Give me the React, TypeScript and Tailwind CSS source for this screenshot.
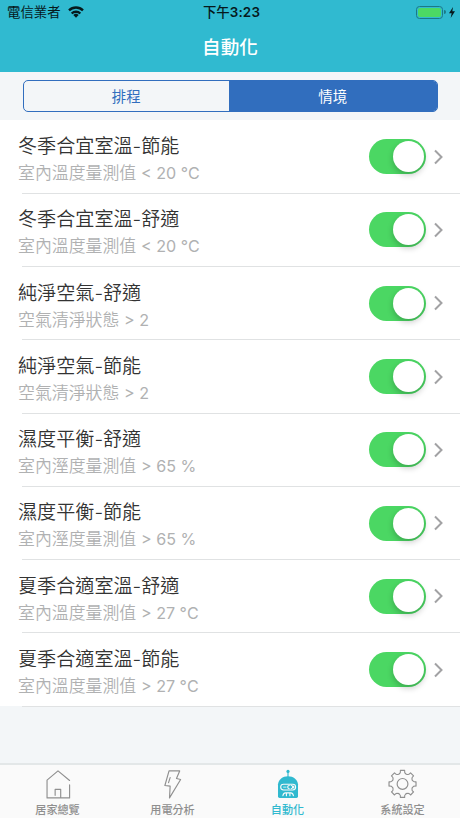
import type { ReactNode } from "react";

type Rule = {
  title: string;
  condition: string;
  value: string;
};

const RULES: Rule[] = [
  { title: "冬季合宜室溫-節能", condition: "室內溫度量測值", value: "< 20 °C" },
  { title: "冬季合宜室溫-舒適", condition: "室內溫度量測值", value: "< 20 °C" },
  { title: "純淨空氣-舒適", condition: "空氣清淨狀態", value: "> 2" },
  { title: "純淨空氣-節能", condition: "空氣清淨狀態", value: "> 2" },
  { title: "濕度平衡-舒適", condition: "室內溼度量測值", value: "> 65 %" },
  { title: "濕度平衡-節能", condition: "室內溼度量測值", value: "> 65 %" },
  { title: "夏季合適室溫-舒適", condition: "室內溫度量測值", value: "> 27 °C" },
  { title: "夏季合適室溫-節能", condition: "室內溫度量測值", value: "> 27 °C" },
];

function StatusBar() {
  return (
    <div className="grid h-6 grid-cols-3 items-center text-[13.4px] font-medium leading-6 text-[#06191c]">
      <div className="flex items-center gap-[7px] pl-[7px]">
        <span className="font-normal">電信業者</span>
        <svg viewBox="0 0 48 36" className="h-3 w-4" fill="none" stroke="#06191c" strokeWidth="7">
          <path d="M3 13a30 30 0 0 1 42 0M11 22.5a19 19 0 0 1 26 0" />
          <path d="M24 35l-8-8a12 12 0 0 1 16 0z" fill="#06191c" stroke="none" />
        </svg>
      </div>
      <div className="pl-[3px] text-center">
        下午<span className="font-semibold tracking-[0.2px]">3:23</span>
      </div>
      <div className="flex items-center justify-end pr-[5px]">
        <div className="h-[13px] w-[27px] rounded-[3.5px] border border-[#1c7986] p-px">
          <div className="h-full rounded-[2px] bg-[#4cd964]" />
        </div>
        <div className="ml-px h-1 w-[1.5px] rounded-r bg-[#1c7986]" />
        <svg viewBox="0 0 18 33" className="ml-[3px] h-[11px] w-[6px]" fill="#06191c">
          <path d="M12 0L0 19h8L5 33l13-20h-8z" />
        </svg>
      </div>
    </div>
  );
}

function Toggle() {
  return (
    <div className="flex h-[35px] w-[57px] shrink-0 items-center justify-end rounded-full bg-[#4bd763] pr-[2px]">
      <div className="h-[31px] w-[31px] rounded-full bg-white shadow-[0_3px_6px_rgba(0,0,0,0.22)]" />
    </div>
  );
}

function RuleRow({ title, condition, value }: Rule) {
  return (
    <div className="relative flex h-[73.3px] items-center bg-white pl-[18px] pr-[17px] after:absolute after:-bottom-[0.4px] after:left-[22px] after:right-0 after:z-10 after:h-px after:bg-[#e0e2e3]">
      <div className="flex-1 whitespace-nowrap pt-[4.6px]">
        <div className="text-[19.1px] font-[350] leading-7 text-[#333333]">{title}</div>
        <div className="text-[16.9px] font-[350] leading-[26px] text-[#b0b1b2]">
          {condition} <span className="text-[16.1px] font-normal">{value}</span>
        </div>
      </div>
      <Toggle />
      <svg viewBox="0 0 9 16" className="ml-2 h-4 w-[9px]" fill="none" stroke="#a2a2a4" strokeWidth="2">
        <path d="M1 1.5L7.5 8 1 14.5" />
      </svg>
    </div>
  );
}

// Outline of an eight-toothed gear centred on (46.5, 47)
function gearPath() {
  const at = (r: number, deg: number) => {
    const a = (deg * Math.PI) / 180;
    return `${(46.5 + r * Math.cos(a)).toFixed(1)} ${(47 + r * Math.sin(a)).toFixed(1)}`;
  };
  let d = `M${at(43, -9)}`;
  for (let i = 0; i < 8; i++) {
    const t = i * 45;
    d += `L${at(43, t + 9)}Q${at(35, t + 10)} ${at(34.5, t + 15)}Q${at(31, t + 22.5)} ${at(34.5, t + 30)}Q${at(35, t + 35)} ${at(43, t + 36)}`;
  }
  return d + "Z";
}

function TabIcon({ children }: { children: ReactNode }) {
  return (
    <svg
      viewBox="0 0 96 96"
      className="h-8 w-8"
      fill="none"
      stroke="currentColor"
      strokeWidth="3.6"
      strokeLinejoin="round"
      strokeLinecap="round"
    >
      {children}
    </svg>
  );
}

function Tab({ label, active, children }: { label: string; active?: boolean; children: ReactNode }) {
  return (
    <div
      className={`flex flex-1 flex-col items-center pt-[4px] ${
        active ? "text-[#30b9cf]" : "text-[#8f8f8f]"
      }`}
    >
      <TabIcon>{children}</TabIcon>
      <span className="mt-[2.5px] text-[11.1px] font-medium leading-4">{label}</span>
    </div>
  );
}

export default function App() {
  return (
    <main className="flex h-[818px] w-[460px] flex-col overflow-hidden bg-[#f3f6f8] font-['Inter','Noto_Sans_CJK_TC',sans-serif]">
      <header className="h-[71.5px] bg-[#30bad0]">
        <StatusBar />
        <h1 className="text-center text-[18.6px] font-medium leading-[46px] text-white">自動化</h1>
      </header>

      <div className="h-[48.5px] px-[22.5px] pt-[8.5px]">
        <div className="flex h-8 overflow-hidden rounded-[5px] border border-[#316ebe] text-[14.4px] leading-[31px]">
          <div className="flex-1 text-center text-[#316ebe]">排程</div>
          <div className="w-[207.5px] bg-[#316ebe] text-center text-white">情境</div>
        </div>
      </div>

      <div>
        {RULES.map((rule) => (
          <RuleRow key={rule.title} {...rule} />
        ))}
      </div>

      <nav className="mt-auto flex h-[55px] border-t-2 border-[#e3e7e8] bg-[#fafafa]">
        <Tab label="居家總覽">
          <path d="M84.5 36L48 6 13.5 35V91H84.5V50M39 83V64H56.5V91" />
        </Tab>
        <Tab label="用電分析">
          <path d="M35.5 6H69L59 30 72 33 37 91 39 54 22.5 52ZM39 27L34 43" />
        </Tab>
        <Tab label="自動化" active>
          <path d="M48 25V8" />
          <circle cx="48" cy="7.5" r="5" fill="currentColor" stroke="none" />
          <path
            d="M16.5 86V48C18 33 31 22.5 48 22.5S78 33 79.5 48V86Q79.5 91 74.5 91H21.5Q16.5 91 16.5 86Z"
            fill="currentColor"
            stroke="none"
          />
          <g stroke="#fafafa" strokeWidth="3.5">
            <rect x="25" y="48" width="47" height="18" rx="9" />
            <path d="M34 57H42" strokeWidth="2.5" />
            <path d="M52 52a5 5 0 1 0 0 10M58 52a5 5 0 0 1 0 10M66 54V60" />
            <path d="M32 84Q34 75 40 75H57Q63 75 65 84M43 77V84M54 77V84" />
          </g>
        </Tab>
        <Tab label="系統設定">
          <path d={gearPath()} />
          <circle cx="46.5" cy="47" r="17" />
        </Tab>
      </nav>
    </main>
  );
}
